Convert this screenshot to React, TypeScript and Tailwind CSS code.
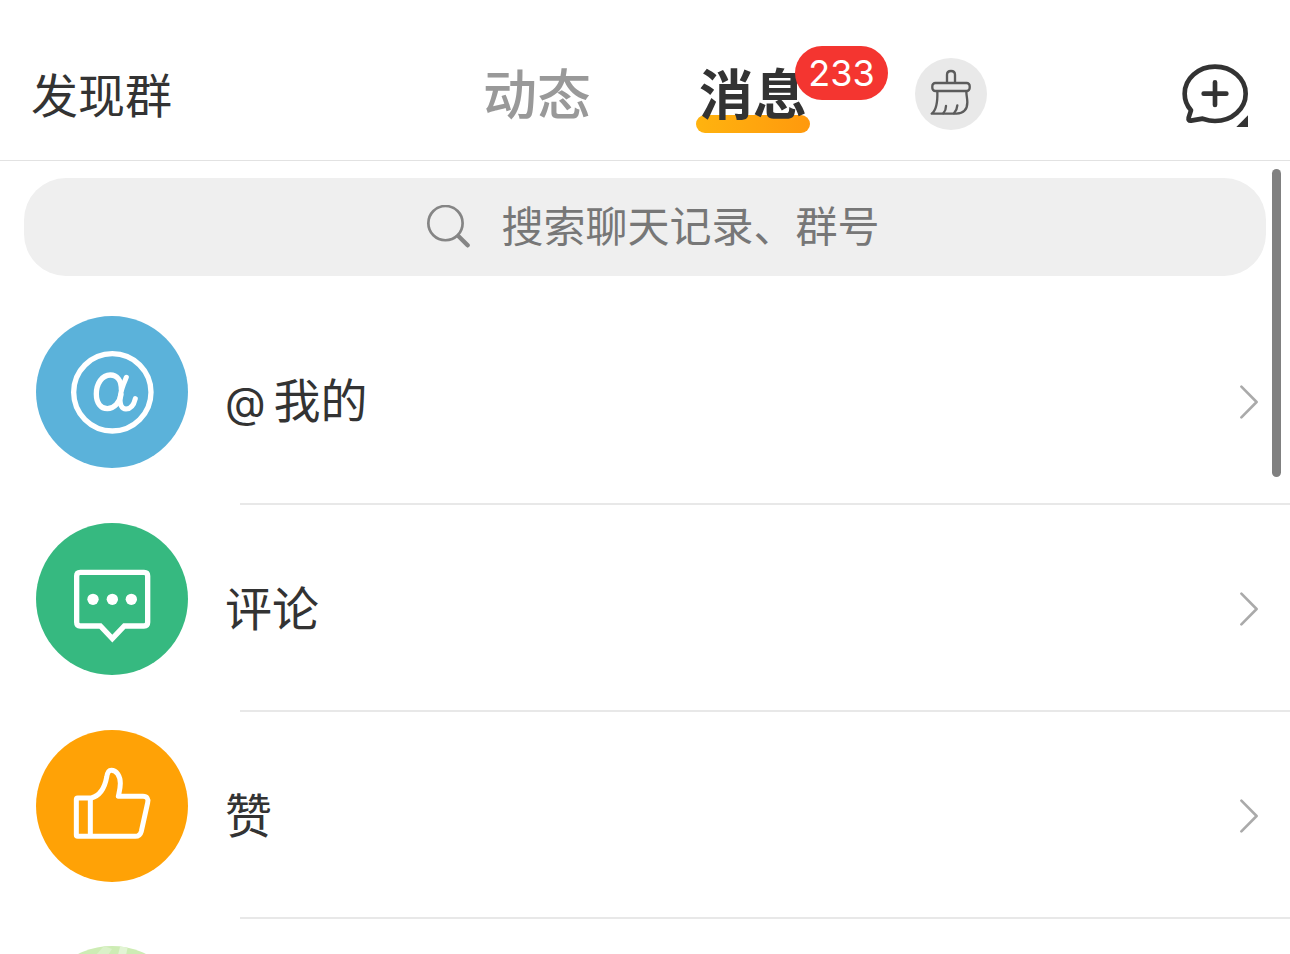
import type { ReactNode } from "react";

function AtIcon() {
  return (
    <svg viewBox="48 48 456 456" className="size-full" fill="none" stroke="#fff" strokeLinecap="round" strokeLinejoin="round" aria-hidden="true">
      <circle cx="277" cy="277" r="116" strokeWidth="16" />
      <path strokeWidth="16" d="M304 268C304 241 291 225 271 225C246 225 229 251 229 282C229 310 243 326 262 326C283 326 299 307 303 284" />
      <path strokeWidth="15" d="M319 232C313 246 304 264 301 288C298 314 305 327 318 327C334 327 342 313 346 296" />
    </svg>
  );
}

function CommentIcon() {
  return (
    <svg viewBox="48 39 456 456" className="size-full" fill="none" stroke="#fff" strokeWidth="16" aria-hidden="true">
      <path d="M181 187H372Q383 187 383 198V337Q383 348 372 348H313L277 386L241 348H181Q170 348 170 337V198Q170 187 181 187Z" />
      <g fill="#fff" stroke="none">
        <circle cx="219" cy="268" r="17" />
        <circle cx="277" cy="268" r="17" />
        <circle cx="334" cy="268" r="17" />
      </g>
    </svg>
  );
}

function LikeIcon() {
  return (
    <svg viewBox="48 30 456 456" className="size-full" fill="none" stroke="#fff" strokeWidth="15" strokeLinejoin="round" aria-hidden="true">
      <path d="M173 234H214C238 228 254 204 260 172C262 158 266 151 274 151C290 151 301 169 301 190C301 206 297 219 295 229H369C381 229 386 237 383 248L364 334C361 345 356 349 346 349H173Q169 349 169 345V238Q169 234 173 234Z" />
      <path d="M211 234V349" />
    </svg>
  );
}

function BroomIcon() {
  return (
    <svg viewBox="705 84 216 216" className="size-full" fill="none" stroke="#5c5c5c" strokeWidth="7" strokeLinecap="round" strokeLinejoin="round" aria-hidden="true">
      <path d="M801 158V134Q801 123 813 123Q825 123 825 134V158" />
      <rect x="757" y="159" width="112" height="24" rx="9" />
      <path d="M772 184C773 213 771 240 755 251H829C853 250 862 238 862 217C862 205 859 196 859 184" />
      <path d="M790 250Q798 241 798 228M822 250Q831 240 832 226" />
    </svg>
  );
}

function NewChatIcon() {
  return (
    <svg viewBox="66 42 198 189" className="h-[63px] w-[66px]" fill="none" stroke="#333" strokeWidth="14" strokeLinecap="round" strokeLinejoin="round" aria-hidden="true">
      <path d="M93 181C80 166 74 150 74 131C74 86 115 50 165 50C216 50 257 86 257 131C257 176 216 213 165 213C152 213 140 210 128 206L93 212Q84 213 86 203Z" />
      <path d="M131 131H199M165 97V165" />
      <path d="M229 231L264 196V231Z" fill="#333" stroke="none" />
    </svg>
  );
}

function SearchIcon() {
  return (
    <svg viewBox="80 104 128 128" className="size-[43px] shrink-0" fill="none" stroke="#858585" strokeLinecap="round" aria-hidden="true">
      <circle cx="135" cy="158" r="51" strokeWidth="8" />
      <path d="M174 197L201 224" strokeWidth="13" />
    </svg>
  );
}

function Chevron() {
  return (
    <svg viewBox="0 0 18 34" className="h-[34px] w-[18px]" fill="none" stroke="#aaa" strokeWidth="2.6" strokeLinecap="round" strokeLinejoin="round" aria-hidden="true">
      <path d="M1.4 1.6L16.6 17L1.4 32.4" />
    </svg>
  );
}

function ChatAvatar() {
  return (
    <svg viewBox="0 0 152 152" className="ml-[36px] size-[152px] rounded-full" aria-hidden="true">
      <rect width="152" height="152" fill="#cdecb4" />
      <path d="M68 0L76 3L72 9H60Z" fill="#daf1c8" />
      <path d="M84 1L92 0L90 9H82Z" fill="#e2f4d4" />
    </svg>
  );
}

type Entry = { id: string; label: ReactNode; color: string; icon: ReactNode };

const entries: Entry[] = [
  {
    id: "mentions",
    label: (
      <>
        <span className="mr-2 text-[42px]">@</span>我的
      </>
    ),
    color: "bg-[#5bb2da]",
    icon: <AtIcon />,
  },
  { id: "comments", label: "评论", color: "bg-[#36b980]", icon: <CommentIcon /> },
  { id: "likes", label: "赞", color: "bg-[#ffa206]", icon: <LikeIcon /> },
];

function EntryRow({ label, color, icon }: Entry) {
  return (
    <li>
      <a href="#" className="flex h-[205px] items-center pt-[3px] pr-8 pl-9">
        <span className={`mt-[15px] size-[152px] shrink-0 self-start rounded-full ${color}`}>{icon}</span>
        <span className="ml-[37px] flex-1 text-[47px] leading-[64px]">{label}</span>
        <Chevron />
      </a>
      <div className="ml-[240px] h-[2px] bg-[#e8e8e8]" />
    </li>
  );
}

export default function App() {
  return (
    <div className="flex h-screen flex-col overflow-hidden bg-white font-['Inter','Noto_Sans_CJK_SC',sans-serif] text-[#333]">
      <header className="grid h-[161px] shrink-0 grid-cols-[1fr_auto_1fr] items-center border-b border-[#e2e2e2] pt-7">
        <button type="button" className="ml-[31px] justify-self-start pt-1 text-[47px] leading-[64px]">
          发现群
        </button>
        <nav className="flex gap-[108px] text-[54px] leading-[72px]">
          <button type="button" className="w-[108px] pt-1 font-medium whitespace-nowrap text-[#999]">
            动态
          </button>
          <button type="button" aria-current="page" className="relative isolate w-[108px] pt-1 font-bold whitespace-nowrap">
            消息
            <span className="absolute -inset-x-[3px] -bottom-px -z-10 h-[18px] rounded-full bg-linear-to-r from-[#ffb30f] to-[#ff990d]" />
            <span className="absolute -top-[10px] left-[96px] flex h-[54px] w-[93px] items-center justify-center rounded-full bg-[#f43530] text-[36px] font-normal text-white">
              233
            </span>
          </button>
        </nav>
        <div className="flex items-center justify-between pr-[42px] pl-[108px]">
          <button type="button" aria-label="清除未读" className="size-[72px] rounded-full bg-[#e9e9e9]">
            <BroomIcon />
          </button>
          <button type="button" aria-label="发起聊天" className="pt-0.5">
            <NewChatIcon />
          </button>
        </div>
      </header>

      <main className="relative min-h-0 flex-1 overflow-hidden">
        <label className="mx-6 mt-[17px] mb-[22px] flex h-[98px] items-center justify-center gap-8 rounded-[42px] bg-[#efefef] pb-[2px] pl-4">
          <SearchIcon />
          <input
            type="text"
            aria-label="搜索"
            placeholder="搜索聊天记录、群号"
            className="h-[64px] w-[378px] bg-transparent text-[42px] outline-none placeholder:text-[#777]"
          />
        </label>
        <ul>
          {entries.map((entry) => (
            <EntryRow key={entry.id} {...entry} />
          ))}
          <li className="pt-[27px]">
            <ChatAvatar />
          </li>
        </ul>
        <div className="absolute top-2 right-[9px] h-[308px] w-[9px] rounded-full bg-[#808080]" />
      </main>
    </div>
  );
}
